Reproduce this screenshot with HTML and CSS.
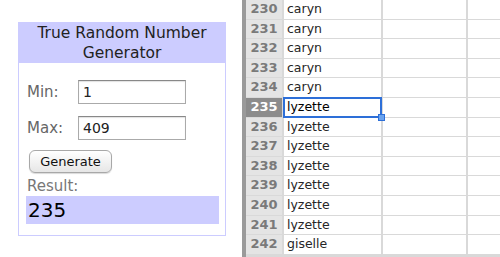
FILE: index.html
```html
<!DOCTYPE html>
<html>
<head>
<meta charset="utf-8">
<link rel="stylesheet" href="styles.css">
</head>
<body>
<div class="page">
  <div class="left">
    <div class="panel">
      <div class="title">True Random Number<br>Generator</div>
      <div class="body">
        <div class="field"><span class="lbl">Min:</span><input class="inp" type="text" value="1"></div>
        <div class="field"><span class="lbl">Max:</span><input class="inp" type="text" value="409"></div>
        <button class="btn">Generate</button>
        <div class="res-lbl">Result:</div>
        <div class="res">235</div>
      </div>
    </div>
  </div>
  <div class="sheet">
    <div class="bar"></div>
    <div class="grid">
      <div class="rh">230</div><div class="c">caryn</div><div class="c"></div><div class="c"></div>
      <div class="rh">231</div><div class="c">caryn</div><div class="c"></div><div class="c"></div>
      <div class="rh">232</div><div class="c">caryn</div><div class="c"></div><div class="c"></div>
      <div class="rh">233</div><div class="c">caryn</div><div class="c"></div><div class="c"></div>
      <div class="rh">234</div><div class="c">caryn</div><div class="c"></div><div class="c"></div>
      <div class="rh sel">235</div><div class="c active">lyzette<span class="handle"></span></div><div class="c"></div><div class="c"></div>
      <div class="rh">236</div><div class="c">lyzette</div><div class="c"></div><div class="c"></div>
      <div class="rh">237</div><div class="c">lyzette</div><div class="c"></div><div class="c"></div>
      <div class="rh">238</div><div class="c">lyzette</div><div class="c"></div><div class="c"></div>
      <div class="rh">239</div><div class="c">lyzette</div><div class="c"></div><div class="c"></div>
      <div class="rh">240</div><div class="c">lyzette</div><div class="c"></div><div class="c"></div>
      <div class="rh">241</div><div class="c">lyzette</div><div class="c"></div><div class="c"></div>
      <div class="rh">242</div><div class="c">giselle</div><div class="c"></div><div class="c"></div>
    </div>
  </div>
</div>
</body>
</html>
```

FILE: styles.css
```css
html, body {
  margin: 0;
  padding: 0;
  background: #fff;
}
.page {
  display: flex;
  width: 500px;
  height: 257px;
  overflow: hidden;
  font-family: "DejaVu Sans", Verdana, sans-serif;
}
.left {
  width: 242px;
  flex: none;
  padding: 22px 0 0 18px;
  box-sizing: border-box;
}
.panel {
  width: 208px;
  box-sizing: border-box;
  border: 1px solid #ccccff;
  border-top: none;
  background: #fff;
}
.title {
  background: #ccccff;
  height: 41px;
  box-sizing: border-box;
  padding-top: 1px;
  margin: 0 -1px;
  text-align: center;
  font-size: 15.5px;
  line-height: 20px;
  color: #222;
}
.body {
  padding: 17px 6px 11px 8px;
}
.field {
  display: flex;
  align-items: center;
  margin-bottom: 12px;
}
.lbl {
  width: 51px;
  font-size: 15px;
  color: #666;
}
.inp {
  width: 108px;
  height: 24px;
  box-sizing: border-box;
  border: 1px solid #aaa;
  border-top-color: #888;
  box-shadow: inset 0 1px 1px rgba(0,0,0,0.12);
  padding: 0 0 0 4px;
  margin: 0;
  font-family: "DejaVu Sans", Verdana, sans-serif;
  font-size: 14px;
  color: #222;
  background: #fff;
  outline: none;
}
.btn {
  display: block;
  margin: -2px 0 0 2px;
  width: 83px;
  height: 23px;
  padding: 0;
  border: 1px solid #a8a8a8;
  border-radius: 6px;
  background: linear-gradient(#ffffff, #e6e6e6);
  box-shadow: 0 1px 1px rgba(0,0,0,0.15);
  font-family: "DejaVu Sans", Verdana, sans-serif;
  font-size: 13px;
  color: #111;
}
.res-lbl {
  margin-top: 4px;
  font-size: 15px;
  line-height: 18px;
  color: #777;
}
.res {
  margin: 1px 0 0 -1px;
  height: 28px;
  background: #ccccff;
  padding-left: 2px;
  font-size: 20px;
  line-height: 28px;
  color: #000;
}
.sheet {
  flex: 1;
  display: flex;
  background: #d6d6d6;
}
.bar {
  width: 4px;
  flex: none;
  background: #9a9a9a;
}
.grid {
  flex: 1;
  display: grid;
  grid-template-columns: 36px 97px 83px 1fr;
  grid-auto-rows: 18.6px;
  column-gap: 2px;
  row-gap: 1px;
  background: #d9d9d9;
  align-content: start;
  padding-bottom: 2px;
}
.rh {
  background: #e4e4e4;
  color: #7a7a7a;
  font-weight: bold;
  font-size: 13px;
  line-height: 18.6px;
  text-align: center;
}
.rh.sel {
  background: #8c8c8c;
  color: #fff;
}
.c {
  background: #fff;
  font-size: 12.5px;
  line-height: 18.6px;
  padding-left: 3px;
  color: #262626;
  position: relative;
}
.c.active {
  color: #000;
  box-shadow: 0 0 0 1px #2d6fd8, inset 0 0 0 1px #2d6fd8;
  z-index: 1;
}
.handle {
  position: absolute;
  right: -4px;
  bottom: -4px;
  width: 5px;
  height: 5px;
  background: #6aa3ee;
  border: 1px solid #2d6fd8;
}
```
